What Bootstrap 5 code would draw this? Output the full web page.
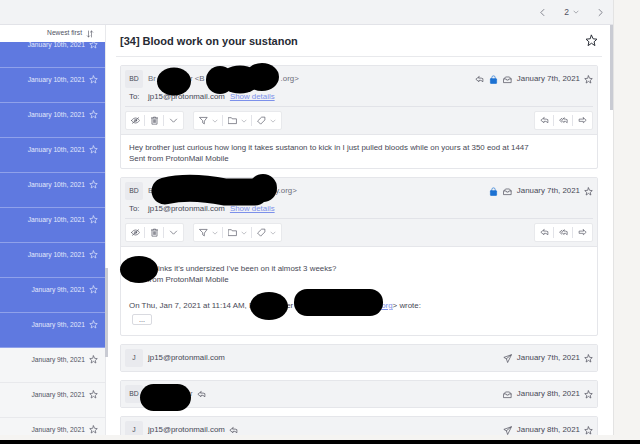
<!DOCTYPE html>
<html>
<head>
    <title>ProtonMail</title>
    <link href="https://cdn.jsdelivr.net/npm/bootstrap@5.3.2/dist/css/bootstrap.min.css" rel="stylesheet">
    <style>
        html, body { height: 444px; overflow: hidden; }
        body { background: #f5f4f2; font-family: "Liberation Sans", Arial, sans-serif; font-size: 7.9px; line-height: 10.5px; color: #474855; }
        svg.ico { width: 9px; height: 9px; fill: none; stroke: currentColor; stroke-width: 1.2; stroke-linecap: round; stroke-linejoin: round; flex: none; }
        .frame { width: 614px; height: 435px; border-right: 1px solid #e3e3e3; background: #fff; }
        .topbar { height: 25px; background: #f2f3f5; border-bottom: 1px solid #e2e3e8; color: #50525f; }
        .pager-num { margin: 0 4px 0 17px; font-size: 8.5px; }
        .pager-next { margin: 0 8px 0 17px; }
        .panes { height: 410px; }
        .left-pane { width: 106px; border-right: 1px solid #e8e9ec; }
        .sort-row { height: 17px; padding-right: 11px; font-size: 6.7px; color: #50525f; }
        .sort-row svg.ico { width: 8px; height: 8px; margin-left: 4px; }
        .list-clip { height: 393px; }
        .mail-list { margin-top: -9px; }
        .mail-item { height: 35px; padding: 7px 7px 0 0; background: #f5f6f7; border-bottom: 1px solid #e8e9ec; font-size: 6.7px; line-height: 9px; color: #50525f; }
        .mail-item svg.ico { margin-left: 4px; }
        .mail-item.sel { background: #5f79e0; border-bottom-color: #8fa1ea; color: #e3e8fb; }
        .list-scroll { position: absolute; left: 105px; top: 268px; width: 3px; height: 89px; background: #c9cbd3; }
        .main-scroll { position: absolute; left: 610px; top: 25px; width: 3px; height: 85px; background: #c9cbd3; }
        .right-pane { min-width: 0; }
        .title-row { height: 32px; margin: 0 11px 0 10px; padding: 0 4px; border-bottom: 1px solid #e8e9ec; }
        .title-row h1 { font-size: 11px; font-weight: 700; line-height: 16px; color: #262a33; }
        .title-row svg.ico { width: 13px; height: 13px; color: #262a33; }
        .thread { margin: 8px 15px 0 14px; }
        .msg { border: 1px solid #e5e6ea; border-radius: 2px; margin-bottom: 8px; background: #fff; }
        .msg-head { background: #f2f3f5; padding: 4px; }
        .msg-head.open { border-bottom: 1px solid #e5e6ea; }
        .msg-head.shut { line-height: 12px; }
        .row-line { height: 18px; }
        .row-line.to-row { line-height: 12px; }
        .avatar { width: 18px; height: 18px; background: #e9eaee; border-radius: 2px; font-size: 6.8px; margin-right: 5px; flex: none; }
        .to-label { width: 18px; margin-right: 5px; padding-left: 4px; }
        .grey-txt { color: #6c6e7b; }
        .show-link { color: #7c90ea; text-decoration: underline; margin-left: 5px; }
        .msg-meta svg.ico { margin-right: 5px; }
        .msg-meta svg.ico.fav { margin: 0 0 0 4px; }
        svg.ico.lock { color: #1d72d3; fill: #1d72d3; }
        .tools { padding-top: 4px; border-top: 1px solid #e2e3e8; }
        .tool-group { height: 19px; background: #fff; border: 1px solid #e8e9ec; border-radius: 2px; margin-right: 9px; }
        .tool-group.last { margin-right: 0; }
        .tool-btn { width: 19px; height: 11px; border-right: 1px solid #e2e3e8; color: #555764; }
        .tool-btn.wide { width: 29px; }
        .tool-btn:last-child { border-right: 0; }
        .tool-btn svg.chev { width: 6px; height: 6px; margin-left: 4px; color: #777985; }
        .msg-body { padding: 8px 8px 4px; }
        .msg-body.second { padding-top: 17px; height: 88px; }
        .hid-a { display: inline-block; width: 34px; }
        .hid-b { display: inline-block; width: 76px; }
        .hid-c { display: inline-block; width: 122px; }
        .hid-d { display: inline-block; width: 29px; }
        .hid-e { display: inline-block; width: 32px; }
        .hid-f { display: inline-block; width: 88px; }
        .hid-g { display: inline-block; width: 42px; }
        .quote-line { margin-top: 16px; }
        .more-btn { width: 20px; height: 11px; margin: 2px 0 0 3px; border: 1px solid #d9dae0; border-radius: 2px; font-size: 7px; line-height: 7px; }
        .bar-gap { height: 5px; }
        .black-bar { height: 4px; background: #000; }
        .blobs { position: absolute; left: 0; top: 0; width: 640px; height: 444px; pointer-events: none; }
    </style>
</head>
<body class="position-relative">
    <svg width="0" height="0" class="position-absolute">
        <symbol id="i-star" viewBox="0 0 16 16"><path d="M8 1.500l2 4.400 4.700.5-3.500 3.200 1 4.700L8 11.400l-4.200 2.900 1-4.700L1.300 6.400 6 5.900z"/></symbol>
        <symbol id="i-reply" viewBox="0 0 16 16"><path d="M7 3L1.500 7.500 7 12V9.500h3.500l3.500 2.500V6.500L11 5.500H7z"/></symbol>
        <symbol id="i-replyall" viewBox="0 0 16 16"><path d="M5 4L1 7.500 5 11M9 3.500L4.500 7.500 9 11.500V9.500h2.500l3 2.500V6.500l-3-1H9z"/></symbol>
        <symbol id="i-forward" viewBox="0 0 16 16"><path d="M9.500 3l5 4.500-5 4.500V9.500H2V5.500h7.500z"/></symbol>
        <symbol id="i-lock" viewBox="0 0 16 16"><path d="M5 7V4.500a3 3 0 0 1 6 0V7" fill="none"/><rect x="2.500" y="6.500" width="11" height="8.500" rx="1"/></symbol>
        <symbol id="i-open" viewBox="0 0 16 16"><path d="M1.500 7l3-3.500h7l3 3.500v6.500h-13zM1.500 7h4l1 2h3l1-2h4"/></symbol>
        <symbol id="i-sent" viewBox="0 0 16 16"><path d="M14.500 1.500L1.500 6l4.500 2.500 2 6zM6 8.500l8.500-7"/></symbol>
        <symbol id="i-eye" viewBox="0 0 16 16"><path d="M1 8s2.500-4.500 7-4.500S15 8 15 8s-2.500 4.500-7 4.500S1 8 1 8zM2.500 13L13.500 3"/><circle cx="8" cy="8" r="2"/></symbol>
        <symbol id="i-trash" viewBox="0 0 16 16"><path d="M2.500 3.500h11M6 3.500V2h4v1.500M3.500 3.500v11h9v-11M6 6.500v5M8 6.500v5M10 6.500v5"/></symbol>
        <symbol id="i-chev" viewBox="0 0 16 16"><path d="M2.500 5.500L8 11l5.500-5.500"/></symbol>
        <symbol id="i-filter" viewBox="0 0 16 16"><path d="M1.500 2.500h13L9.500 9v5L6.500 12V9z"/></symbol>
        <symbol id="i-folder" viewBox="0 0 16 16"><path d="M1 3h5l1.500 2H15v8.500H1z"/></symbol>
        <symbol id="i-tag" viewBox="0 0 16 16"><path d="M9 2h5v5l-7.500 7.500-5-5z"/></symbol>
        <symbol id="i-left" viewBox="0 0 16 16"><path d="M10.500 2.500L5 8l5.500 5.500"/></symbol>
        <symbol id="i-right" viewBox="0 0 16 16"><path d="M5.500 2.500L11 8l-5.500 5.500"/></symbol>
        <symbol id="i-sort" viewBox="0 0 16 16"><path d="M5 2v12M2.500 11.500L5 14l2.500-2.500M11 14V2M8.500 4.500L11 2l2.500 2.500"/></symbol>
    </svg>

    <div class="frame d-flex flex-column">
        <div class="topbar d-flex align-items-center justify-content-end">
            <svg class="ico"><use href="#i-left"/></svg>
            <span class="pager-num">2</span>
            <svg class="ico" style="width:6px;height:6px"><use href="#i-chev"/></svg>
            <svg class="ico pager-next"><use href="#i-right"/></svg>
        </div>
        <div class="panes d-flex">
            <div class="left-pane overflow-hidden">
                <div class="sort-row bg-white d-flex align-items-center justify-content-end">
                    Newest first
                    <svg class="ico"><use href="#i-sort"/></svg>
                </div>
                <div class="list-clip overflow-hidden">
                    <div class="mail-list">
                        <div class="mail-item sel d-flex justify-content-end">January 10th, 2021<svg class="ico"><use href="#i-star"/></svg></div>
                        <div class="mail-item sel d-flex justify-content-end">January 10th, 2021<svg class="ico"><use href="#i-star"/></svg></div>
                        <div class="mail-item sel d-flex justify-content-end">January 10th, 2021<svg class="ico"><use href="#i-star"/></svg></div>
                        <div class="mail-item sel d-flex justify-content-end">January 10th, 2021<svg class="ico"><use href="#i-star"/></svg></div>
                        <div class="mail-item sel d-flex justify-content-end">January 10th, 2021<svg class="ico"><use href="#i-star"/></svg></div>
                        <div class="mail-item sel d-flex justify-content-end">January 10th, 2021<svg class="ico"><use href="#i-star"/></svg></div>
                        <div class="mail-item sel d-flex justify-content-end">January 10th, 2021<svg class="ico"><use href="#i-star"/></svg></div>
                        <div class="mail-item sel d-flex justify-content-end">January 9th, 2021<svg class="ico"><use href="#i-star"/></svg></div>
                        <div class="mail-item sel d-flex justify-content-end">January 9th, 2021<svg class="ico"><use href="#i-star"/></svg></div>
                        <div class="mail-item d-flex justify-content-end">January 9th, 2021<svg class="ico"><use href="#i-star"/></svg></div>
                        <div class="mail-item d-flex justify-content-end">January 9th, 2021<svg class="ico"><use href="#i-star"/></svg></div>
                        <div class="mail-item d-flex justify-content-end">January 9th, 2021<svg class="ico"><use href="#i-star"/></svg></div>
                    </div>
                </div>
            </div>
            <div class="right-pane flex-grow-1 overflow-hidden">
                <div class="title-row d-flex align-items-center justify-content-between">
                    <h1 class="m-0">[34] Blood work on your sustanon</h1>
                    <svg class="ico"><use href="#i-star"/></svg>
                </div>
                <div class="thread">
                    <!-- first open message -->
                    <div class="msg">
                        <div class="msg-head open">
                            <div class="row-line d-flex align-items-center">
                                <span class="avatar d-flex align-items-center justify-content-center">BD</span>
                                <span class="grey-txt">Br<span class="hid-a"></span>r &lt;B<span class="hid-b"></span>.org&gt;</span>
                                <div class="msg-meta ms-auto d-flex align-items-center">
                                    <svg class="ico"><use href="#i-reply"/></svg>
                                    <svg class="ico lock"><use href="#i-lock"/></svg>
                                    <svg class="ico"><use href="#i-open"/></svg>
                                    <span>January 7th, 2021</span>
                                    <svg class="ico fav"><use href="#i-star"/></svg>
                                </div>
                            </div>
                            <div class="row-line to-row d-flex align-items-center">
                                <span class="to-label">To:</span>
                                <span>jp15@protonmail.com</span>
                                <a class="show-link" href="#">Show details</a>
                            </div>
                            <div class="tools d-flex">
                                <div class="tool-group d-flex align-items-center">
                                    <span class="tool-btn d-flex align-items-center justify-content-center"><svg class="ico"><use href="#i-eye"/></svg></span>
                                    <span class="tool-btn d-flex align-items-center justify-content-center"><svg class="ico"><use href="#i-trash"/></svg></span>
                                    <span class="tool-btn d-flex align-items-center justify-content-center"><svg class="ico"><use href="#i-chev"/></svg></span>
                                </div>
                                <div class="tool-group d-flex align-items-center">
                                    <span class="tool-btn wide d-flex align-items-center justify-content-center"><svg class="ico"><use href="#i-filter"/></svg><svg class="ico chev"><use href="#i-chev"/></svg></span>
                                    <span class="tool-btn wide d-flex align-items-center justify-content-center"><svg class="ico"><use href="#i-folder"/></svg><svg class="ico chev"><use href="#i-chev"/></svg></span>
                                    <span class="tool-btn wide d-flex align-items-center justify-content-center"><svg class="ico"><use href="#i-tag"/></svg><svg class="ico chev"><use href="#i-chev"/></svg></span>
                                </div>
                                <div class="tool-group last ms-auto d-flex align-items-center">
                                    <span class="tool-btn d-flex align-items-center justify-content-center"><svg class="ico"><use href="#i-reply"/></svg></span>
                                    <span class="tool-btn d-flex align-items-center justify-content-center"><svg class="ico"><use href="#i-replyall"/></svg></span>
                                    <span class="tool-btn d-flex align-items-center justify-content-center"><svg class="ico"><use href="#i-forward"/></svg></span>
                                </div>
                            </div>
                        </div>
                        <div class="msg-body">
                            Hey brother just curious how long it takes sustanon to kick in I just pulled bloods while on yours at 350 eod at 1447<br>
                            Sent from ProtonMail Mobile
                        </div>
                    </div>

                    <!-- second open message -->
                    <div class="msg">
                        <div class="msg-head open">
                            <div class="row-line d-flex align-items-center">
                                <span class="avatar d-flex align-items-center justify-content-center">BD</span>
                                <span class="grey-txt">B<span class="hid-c"></span>y.org&gt;</span>
                                <div class="msg-meta ms-auto d-flex align-items-center">
                                    <svg class="ico lock"><use href="#i-lock"/></svg>
                                    <svg class="ico"><use href="#i-open"/></svg>
                                    <span>January 7th, 2021</span>
                                    <svg class="ico fav"><use href="#i-star"/></svg>
                                </div>
                            </div>
                            <div class="row-line to-row d-flex align-items-center">
                                <span class="to-label">To:</span>
                                <span>jp15@protonmail.com</span>
                                <a class="show-link" href="#">Show details</a>
                            </div>
                            <div class="tools d-flex">
                                <div class="tool-group d-flex align-items-center">
                                    <span class="tool-btn d-flex align-items-center justify-content-center"><svg class="ico"><use href="#i-eye"/></svg></span>
                                    <span class="tool-btn d-flex align-items-center justify-content-center"><svg class="ico"><use href="#i-trash"/></svg></span>
                                    <span class="tool-btn d-flex align-items-center justify-content-center"><svg class="ico"><use href="#i-chev"/></svg></span>
                                </div>
                                <div class="tool-group d-flex align-items-center">
                                    <span class="tool-btn wide d-flex align-items-center justify-content-center"><svg class="ico"><use href="#i-filter"/></svg><svg class="ico chev"><use href="#i-chev"/></svg></span>
                                    <span class="tool-btn wide d-flex align-items-center justify-content-center"><svg class="ico"><use href="#i-folder"/></svg><svg class="ico chev"><use href="#i-chev"/></svg></span>
                                    <span class="tool-btn wide d-flex align-items-center justify-content-center"><svg class="ico"><use href="#i-tag"/></svg><svg class="ico chev"><use href="#i-chev"/></svg></span>
                                </div>
                                <div class="tool-group last ms-auto d-flex align-items-center">
                                    <span class="tool-btn d-flex align-items-center justify-content-center"><svg class="ico"><use href="#i-reply"/></svg></span>
                                    <span class="tool-btn d-flex align-items-center justify-content-center"><svg class="ico"><use href="#i-replyall"/></svg></span>
                                    <span class="tool-btn d-flex align-items-center justify-content-center"><svg class="ico"><use href="#i-forward"/></svg></span>
                                </div>
                            </div>
                        </div>
                        <div class="msg-body second">
                            <span class="hid-d"></span>inks it's undersized I've been on it almost 3 weeks?<br>
                            Sent from ProtonMail Mobile
                            <div class="quote-line">On Thu, Jan 7, 2021 at 11:14 AM, B<span class="hid-e"></span>er<span class="hid-f"></span><a class="show-link ms-0" href="#">org</a>&gt; wrote:</div>
                            <div class="more-btn d-flex align-items-center justify-content-center">...</div>
                        </div>
                    </div>

                    <!-- collapsed messages -->
                    <div class="msg">
                        <div class="msg-head shut d-flex align-items-center">
                            <span class="avatar d-flex align-items-center justify-content-center">J</span>
                            <span>jp15@protonmail.com</span>
                            <div class="msg-meta ms-auto d-flex align-items-center">
                                <svg class="ico"><use href="#i-sent"/></svg>
                                <span>January 7th, 2021</span>
                                <svg class="ico fav"><use href="#i-star"/></svg>
                            </div>
                        </div>
                    </div>
                    <div class="msg">
                        <div class="msg-head shut d-flex align-items-center">
                            <span class="avatar d-flex align-items-center justify-content-center">BD</span>
                            <span class="grey-txt me-1"><span class="hid-g"></span>r</span>
                            <svg class="ico"><use href="#i-reply"/></svg>
                            <div class="msg-meta ms-auto d-flex align-items-center">
                                <svg class="ico"><use href="#i-open"/></svg>
                                <span>January 8th, 2021</span>
                                <svg class="ico fav"><use href="#i-star"/></svg>
                            </div>
                        </div>
                    </div>
                    <div class="msg">
                        <div class="msg-head shut d-flex align-items-center">
                            <span class="avatar d-flex align-items-center justify-content-center">J</span>
                            <span class="me-1">jp15@protonmail.com</span>
                            <svg class="ico"><use href="#i-reply"/></svg>
                            <div class="msg-meta ms-auto d-flex align-items-center">
                                <svg class="ico"><use href="#i-sent"/></svg>
                                <span>January 8th, 2021</span>
                                <svg class="ico fav"><use href="#i-star"/></svg>
                            </div>
                        </div>
                    </div>
                </div>
            </div>
        </div>
    </div>
    <div class="bar-gap"></div>
    <div class="black-bar"></div>

    <div class="list-scroll"></div>
    <div class="main-scroll"></div>

    <!-- marker scribbles over the names -->
    <svg class="blobs" viewBox="0 0 640 444">
        <ellipse cx="174" cy="81.500" rx="17" ry="14"/>
        <ellipse cx="220" cy="80" rx="14" ry="14"/>
        <ellipse cx="240" cy="79.500" rx="20" ry="14"/>
        <ellipse cx="262" cy="77" rx="17" ry="14"/>
        <path d="M165 191C185 186 205 188 225 192L255 192" stroke="#000" stroke-width="27" stroke-linecap="round" fill="none"/>
        <circle cx="263" cy="188" r="14"/>
        <ellipse cx="139" cy="269.500" rx="19" ry="13.500"/>
        <ellipse cx="269" cy="306" rx="19" ry="14"/>
        <rect x="294" y="289" width="89" height="27" rx="13"/>
        <rect x="140" y="384" width="51" height="27" rx="13.500"/>
    </svg>
    <script src="https://cdn.jsdelivr.net/npm/bootstrap@5.3.2/dist/js/bootstrap.bundle.min.js"></script>
</body>
</html>
